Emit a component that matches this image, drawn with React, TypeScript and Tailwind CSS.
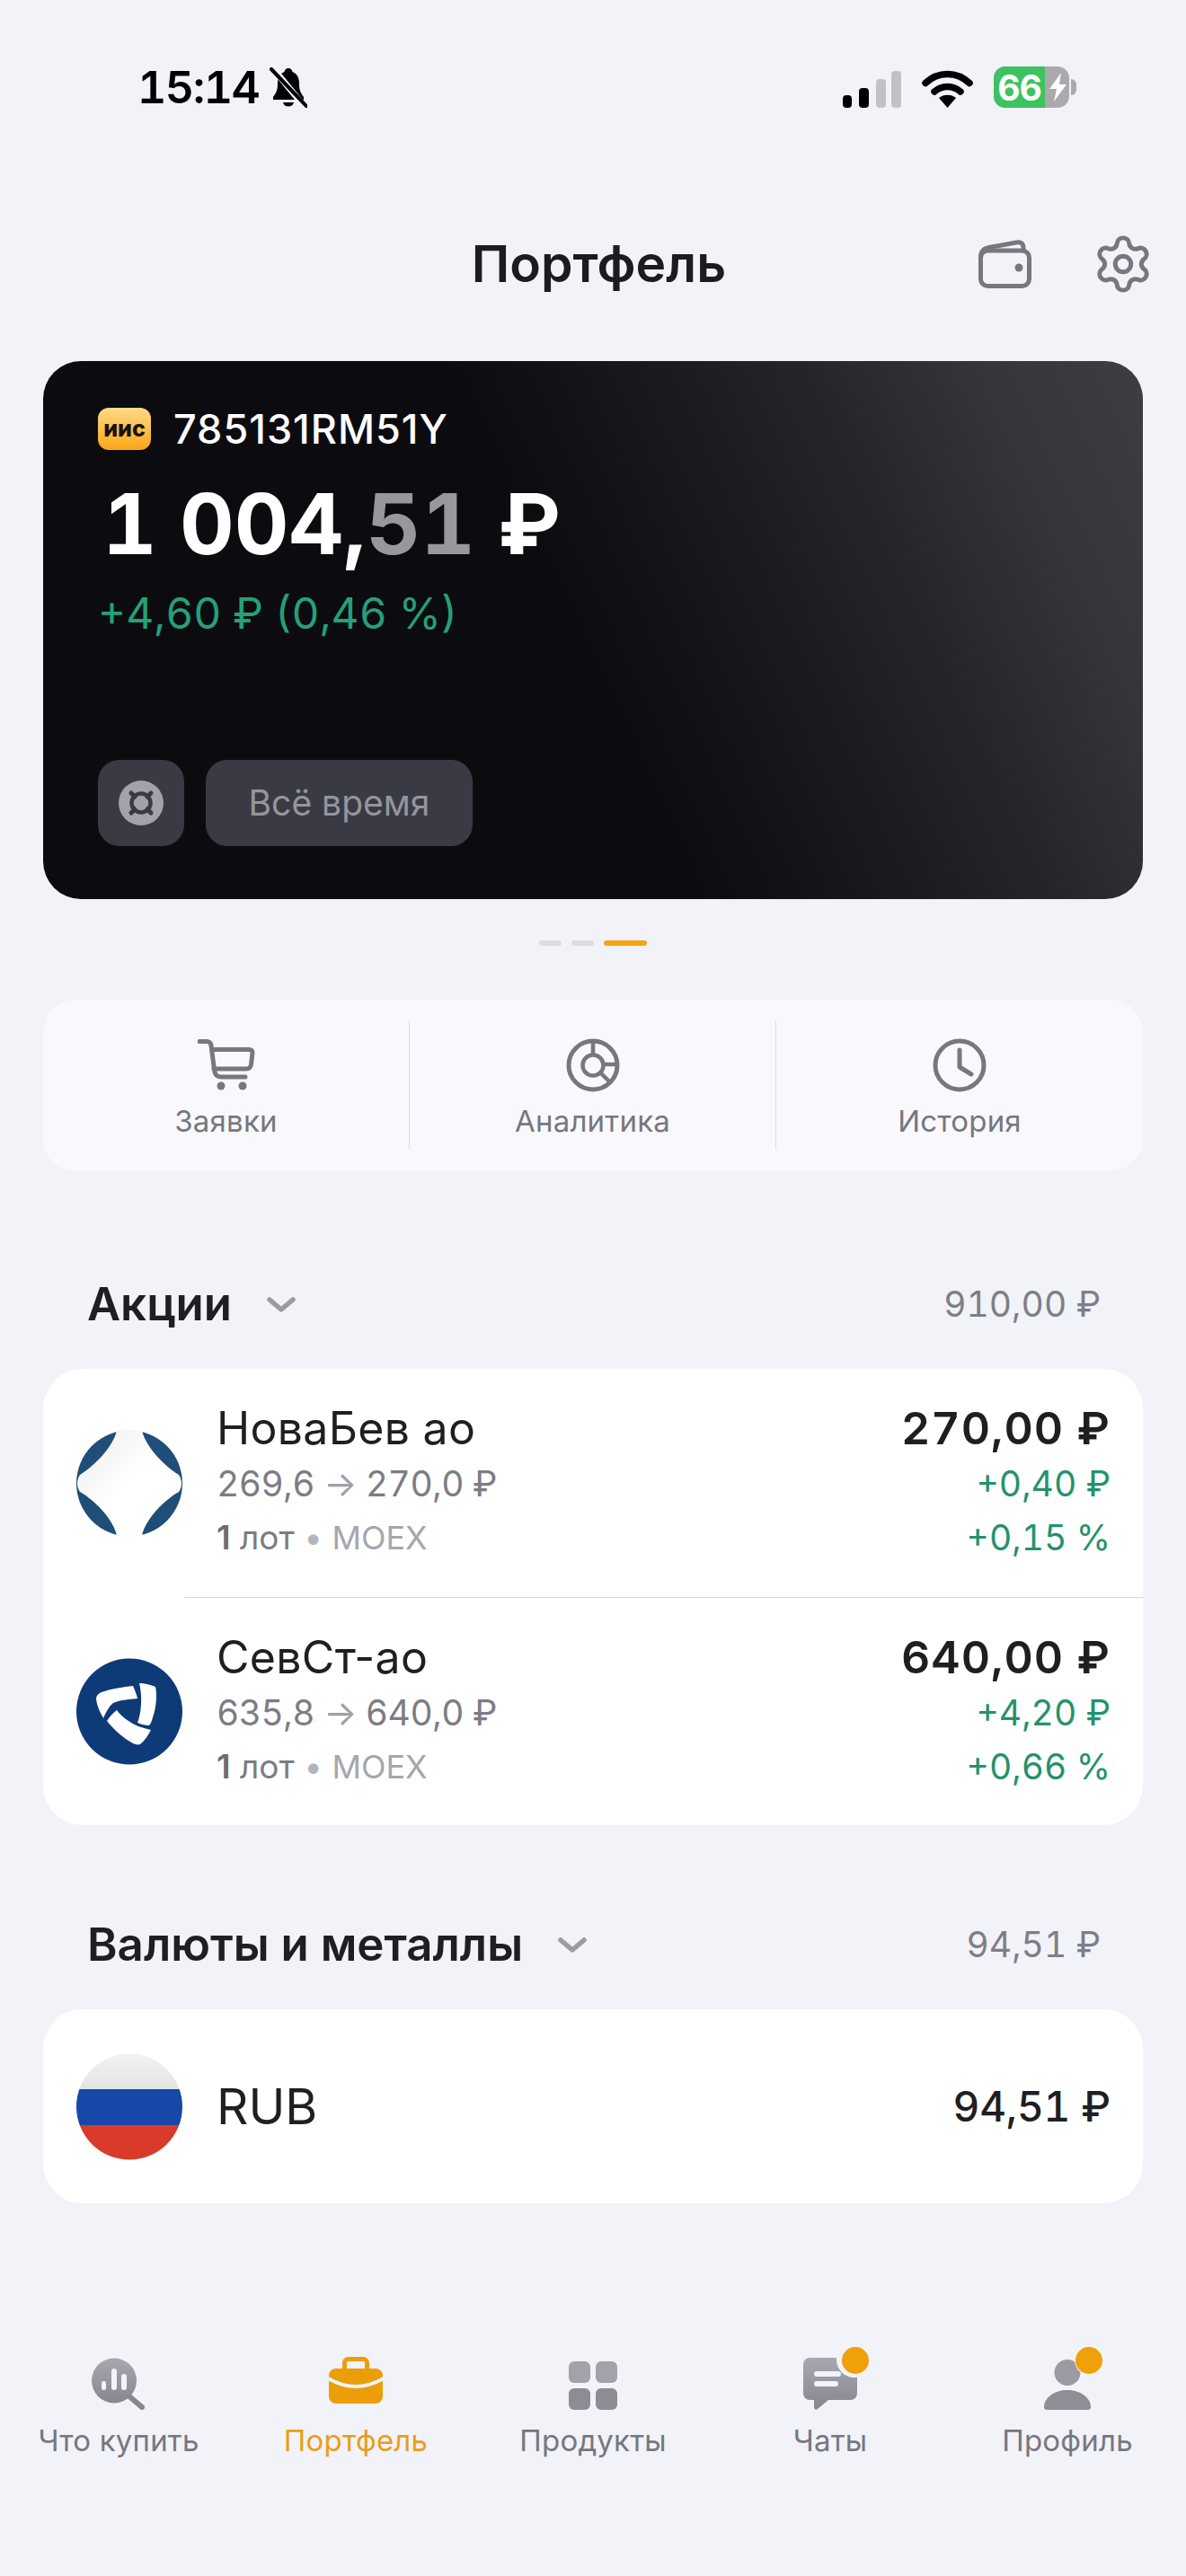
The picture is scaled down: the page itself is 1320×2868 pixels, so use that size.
import { Settings } from 'lucide-react'

const GRAY = '#77777f'

function SignalIcon() {
  return (
    <svg width="65" height="41" viewBox="0 0 65 41">
      <rect x="0" y="27" width="10" height="14" rx="4" fill="#000" />
      <rect x="18" y="19" width="11" height="22" rx="4" fill="#000" />
      <rect x="37" y="9" width="11" height="32" rx="4" fill="#c2c2c6" />
      <rect x="54" y="0" width="11" height="41" rx="4" fill="#c2c2c6" />
    </svg>
  )
}

function WifiIcon() {
  return (
    <svg width="57" height="42" viewBox="0 0 57 42" fill="none">
      <path d="M4 14.5 C18 1 39 1 53 14.5" stroke="#000" strokeWidth="7.5" strokeLinecap="round" />
      <path d="M14 24 C22 16.5 35 16.5 43 24" stroke="#000" strokeWidth="7.5" strokeLinecap="round" />
      <path d="M28.5 42 L19 31 C24 26.5 33 26.5 38 31 Z" fill="#000" />
    </svg>
  )
}

function BellOffIcon() {
  return (
    <svg width="42" height="45" viewBox="0 0 42 45" fill="none">
      <path d="M21 1 C24 1 25 3 25.5 5 C31 7 33 12 33 18 C33 26 35 29 38 33 L38 36 L4 36 L4 33 C7 29 9 26 9 18 C9 12 11 7 16.5 5 C17 3 18 1 21 1 Z" fill="#000" />
      <path d="M15 39 C16 45 26 45 27 39 Z" fill="#000" />
      <path d="M3 0 L39 44" stroke="#f2f2f9" strokeWidth="7" />
      <path d="M2 2 L41 43" stroke="#000" strokeWidth="4" strokeLinecap="round" />
    </svg>
  )
}

function BatteryIcon() {
  return (
    <div className="flex items-center">
      <div className="relative flex h-[46px] w-[84px] overflow-hidden rounded-[13px] bg-[#a9a9ae]">
        <div className="flex h-full w-[57px] items-center justify-center bg-[#3cc35f] text-[39px] font-bold leading-none tracking-[-1px] text-white">
          66
        </div>
        <svg className="absolute left-[60px] top-[7px]" width="23" height="32" viewBox="0 0 23 32">
          <path d="M15 0 L2 18 L10 18 L7 32 L21 13 L13 13 Z" fill="#fff" />
        </svg>
      </div>
      <div className="ml-[2px] h-[18px] w-[6px] rounded-r-full bg-[#a9a9ae]" />
    </div>
  )
}

function WalletIcon() {
  return (
    <svg width="59" height="54" viewBox="0 0 59 54" fill="none" stroke={GRAY} strokeWidth="5">
      <rect x="2.5" y="12" width="54" height="39.5" rx="8" />
      <path d="M2.5 20 C2.5 12 6 9.5 12 8.5 L42 3 C47 2 50 4 50 9 L50 12" />
      <circle cx="45" cy="31" r="4.5" fill={GRAY} stroke="none" />
    </svg>
  )
}

function CartIcon() {
  return (
    <svg width="64" height="58" viewBox="0 0 64 58" fill="none" stroke={GRAY} strokeWidth="5" strokeLinecap="round" strokeLinejoin="round">
      <path d="M2 2.5 H10 C13 2.5 14.5 4 15 7 L18.5 34 C19 39 21 42 26 42 H53" />
      <path d="M15.5 11.5 H57 C60 11.5 61 13 61 15 L59.5 28 C59 31.5 57 33 54 33 H18" />
      <circle cx="26" cy="52" r="4.5" fill={GRAY} stroke="none" />
      <circle cx="50" cy="52" r="4.5" fill={GRAY} stroke="none" />
    </svg>
  )
}

function DonutIcon() {
  return (
    <svg width="60" height="60" viewBox="0 0 60 60" fill="none" stroke={GRAY} strokeWidth="4.5">
      <circle cx="30" cy="30" r="27" strokeWidth="5" />
      <circle cx="30" cy="30" r="11.5" />
      <path d="M30 3 V18 M42 29 H57 M38.5 38.5 L49 49" />
    </svg>
  )
}

function ClockIcon() {
  return (
    <svg width="60" height="60" viewBox="0 0 60 60" fill="none" stroke={GRAY} strokeWidth="5" strokeLinecap="round" strokeLinejoin="round">
      <circle cx="30" cy="30" r="27" />
      <path d="M30 13 V32 L43 40" />
    </svg>
  )
}

function Chevron() {
  return (
    <svg width="32" height="17" viewBox="0 0 32 17" fill="none" stroke="#9b9ba2" strokeWidth="5.5" strokeLinecap="round" strokeLinejoin="round">
      <path d="M3 3 L16 14 L29 3" />
    </svg>
  )
}

function NovaBevLogo() {
  return (
    <svg width="118" height="119" viewBox="0 0 118 119" className="shrink-0">
      <defs>
        <linearGradient id="nb" x1="0" y1="0" x2="1" y2="1">
          <stop offset="0" stopColor="#ececec" />
          <stop offset="0.5" stopColor="#ffffff" />
        </linearGradient>
      </defs>
      <circle cx="59" cy="59.5" r="59" fill="#1f4e78" />
      <path d="M45 1 C60 -1 60 -1 73 1 C78 20 98 40 114 50 C118 56 118 63 114 69 C98 78 78 98 73 117 C60 120 58 120 45 117 C40 98 20 78 4 69 C0 63 0 56 4 50 C20 40 40 20 45 1 Z" fill="url(#nb)" />
    </svg>
  )
}

function SeverstalLogo() {
  return (
    <svg width="118" height="119" viewBox="0 0 118 119" className="shrink-0">
      <circle cx="59" cy="59.5" r="59" fill="#0f3a78" />
      <path d="M22 46 C22 42 24 40 28 38 C40 34 52 32 63 31 C65 36 67 40 68 45 C58 46 48 47 41 50 C36 54 33 60 30 67 C26 60 23 53 22 46 Z" fill="#fff" />
      <path d="M70 28 C76 28 83 30 88 32 C90 40 89 55 85 66 C84 70 83 73 81 75 C77 75 72 74 68 72 C72 62 74 44 70 28 Z" fill="#fff" />
      <path d="M34 70 C37 65 41 61 45 58 C48 62 53 67 58 70 C65 75 74 78 83 80 C80 86 76 92 71 96 C68 97 66 96 63 95 C52 89 42 80 34 70 Z" fill="#fff" />
    </svg>
  )
}

function RuFlag() {
  return (
    <svg width="118" height="119" viewBox="0 0 118 119" className="shrink-0">
      <defs>
        <clipPath id="ru">
          <circle cx="59" cy="59.5" r="59" />
        </clipPath>
        <linearGradient id="ruw" x1="0" y1="0" x2="0" y2="1">
          <stop offset="0" stopColor="#f2f2f2" />
          <stop offset="1" stopColor="#e4e4e4" />
        </linearGradient>
      </defs>
      <g clipPath="url(#ru)">
        <rect x="0" y="0" width="118" height="40" fill="url(#ruw)" />
        <rect x="0" y="40" width="118" height="40" fill="#1747a8" />
        <rect x="0" y="80" width="118" height="39" fill="#d93a2a" />
      </g>
    </svg>
  )
}

function IconGradient({ id }: { id: string }) {
  return (
    <defs>
      <linearGradient id={id} x1="0" y1="0" x2="0" y2="1">
        <stop offset="0" stopColor="#a8a8b0" />
        <stop offset="1" stopColor="#86868e" />
      </linearGradient>
    </defs>
  )
}

function SearchTabIcon() {
  return (
    <svg width="60" height="58" viewBox="0 0 60 58">
      <IconGradient id="t1" />
      <path d="M42 43 L56 55" stroke="#86868e" strokeWidth="6" strokeLinecap="round" />
      <circle cx="25" cy="25.5" r="25" fill="url(#t1)" />
      <rect x="11" y="26" width="5" height="10" rx="2.5" fill="#f2f2f9" />
      <rect x="22" y="12" width="6" height="24" rx="3" fill="#f2f2f9" />
      <rect x="33" y="18" width="6" height="18" rx="3" fill="#f2f2f9" />
    </svg>
  )
}

function CaseTabIcon() {
  return (
    <svg width="60" height="52" viewBox="0 0 60 52" fill="none" className="mb-[7px]">
      <rect x="17.5" y="2.5" width="25" height="16" rx="4" stroke="#ec9e08" strokeWidth="5" />
      <rect x="0" y="13" width="60" height="39" rx="8" fill="#ec9e08" />
      <path d="M-1 24 Q30 42 61 24" stroke="#f2f2f9" strokeWidth="4" />
    </svg>
  )
}

function GridTabIcon() {
  return (
    <svg width="54" height="54" viewBox="0 0 54 54">
      <rect x="0" y="0" width="24" height="24" rx="6" fill="#a2a2aa" />
      <rect x="30" y="0" width="24" height="24" rx="6" fill="#a2a2aa" />
      <rect x="0" y="30" width="24" height="24" rx="6" fill="#8c8c94" />
      <rect x="30" y="30" width="24" height="24" rx="6" fill="#8c8c94" />
    </svg>
  )
}

function ChatTabIcon() {
  return (
    <svg width="60" height="58" viewBox="0 0 60 58">
      <IconGradient id="t4" />
      <path d="M8 0 H52 C57 0 60 3 60 8 V39 C60 44 57 47 52 47 H28 L16 57 C14 58.5 12 57.5 12 55 V47 H8 C3 47 0 44 0 39 V8 C0 3 3 0 8 0 Z" fill="url(#t4)" />
      <rect x="12" y="15" width="30" height="6" rx="3" fill="#f2f2f9" />
      <rect x="12" y="26" width="27" height="6" rx="3" fill="#f2f2f9" />
      <circle cx="57" cy="2" r="20" fill="#f2f2f9" />
    </svg>
  )
}

function ProfileTabIcon() {
  return (
    <svg width="52" height="56" viewBox="0 0 52 56">
      <circle cx="26" cy="14.5" r="14.5" fill="#9a9aa2" />
      <path d="M3 56 C1 56 0 55 0 53 C0 42 12 34 26 34 C40 34 52 42 52 53 C52 55 51 56 49 56 Z" fill="#8e8e96" />
      <circle cx="53" cy="0" r="19" fill="#f2f2f9" />
    </svg>
  )
}

function Action({ icon, label, divided }: { icon: React.ReactNode; label: string; divided?: boolean }) {
  return (
    <div className={`flex h-[143px] flex-col items-center justify-start pt-[19px] ${divided ? 'border-r border-[#dddde2]' : ''}`}>
      <div className="flex h-[60px] items-center">{icon}</div>
      <div className="mt-[10px] text-[33px] leading-[44px] tracking-[0.2px] text-[#77777f]">{label}</div>
    </div>
  )
}

function SectionHead({ title, total }: { title: string; total: string }) {
  return (
    <div className="flex h-[60px] items-center pl-[97px] pr-[95px]">
      <span className="text-[51px] font-semibold leading-[60px] text-[#1f1f23]">{title}</span>
      <span className="ml-[39px]">
        <Chevron />
      </span>
      <span className="ml-auto text-[39px] tabular-nums text-[#7e7e86]">{total}</span>
    </div>
  )
}

function StockRow({ logo, name, from, to, price, delta, percent, height }: {
  logo: React.ReactNode
  name: string
  from: string
  to: string
  price: string
  delta: string
  percent: string
  height: string
}) {
  return (
    <div className={`flex items-center pl-[37px] pr-[36px] ${height}`}>
      {logo}
      <div className="ml-[38px]">
        <div className="text-[50px] leading-[61px] tracking-[0.3px] text-[#1f1f23]">{name}</div>
        <div className="text-[39px] leading-[61px] tracking-[-0.5px] tabular-nums text-[#7c7c84]">
          {from} <span className="text-[#a0a0a8]">→</span> {to}
        </div>
        <div className="text-[37px] leading-[60px] text-[#7c7c84]">
          <span className="font-semibold text-[#6c6c74]">1</span> лот <span className="text-[#b4b4bc]">•</span>{' '}
          <span className="text-[36px] text-[#a6a6ae]">MOEX</span>
        </div>
      </div>
      <div className="ml-auto text-right tabular-nums">
        <div className="text-[50px] font-semibold leading-[61px] tracking-[1px] text-[#1f1f23]">{price}</div>
        <div className="text-[39px] leading-[61px] text-[#24926c]">{delta}</div>
        <div className="text-[39px] leading-[60px] text-[#24926c]">{percent}</div>
      </div>
    </div>
  )
}

function Tab({ icon, label, active, badge }: { icon: React.ReactNode; label: string; active?: boolean; badge?: boolean }) {
  return (
    <div className="flex flex-col items-center">
      <div className="relative flex h-[72px] items-end pb-[2px]">
        {icon}
        {badge && <span className="absolute -right-[13px] top-0 h-[30px] w-[30px] rounded-full bg-[#f0a008]" />}
      </div>
      <div className={`mt-[11px] text-[33px] leading-[42px] tracking-[0.2px] ${active ? 'text-[#e89f17]' : 'text-[#77777f]'}`}>{label}</div>
    </div>
  )
}

export default function App() {
  return (
    <div className="flex h-[2868px] w-[1320px] flex-col overflow-hidden bg-[#f2f2f9] font-['Inter',sans-serif]">
      {/* status bar */}
      <div className="mt-[74px] flex h-[46px] items-center pl-[153px] pr-[122px]">
        <span className="text-[50px] font-semibold leading-none tracking-[-1.5px] tabular-nums text-black">15:14</span>
        <span className="ml-[12px]">
          <BellOffIcon />
        </span>
        <div className="ml-auto flex items-end gap-[23px]">
          <SignalIcon />
          <WifiIcon />
          <BatteryIcon />
        </div>
      </div>

      {/* header */}
      <div className="mt-[139px] grid h-[60px] grid-cols-[1fr_auto_1fr] items-center">
        <div />
        <h1 className="pl-[13px] text-[57px] font-semibold leading-[60px] text-[#1c1c20]">Портфель</h1>
        <div className="flex items-center justify-end gap-[72px] pr-[40px]">
          <WalletIcon />
          <Settings size={70} color={GRAY} strokeWidth={1.7} className="-mx-[5px]" />
        </div>
      </div>

      {/* account card */}
      <div className="mx-[48px] mt-[83px] flex h-[599px] flex-col rounded-[42px] bg-[linear-gradient(65deg,#0c0c10_0%,#0c0c10_48%,#16161b_60%,#25252a_75%,#34343a_87%,#3e3e42_100%)] pb-[59px] pl-[61px] pt-[52px]">
        <div className="flex items-center">
          <span className="flex h-[47px] w-[59px] items-center justify-center rounded-[12px] bg-[linear-gradient(180deg,#ffd98a_0%,#f9a714_100%)] text-[25px] font-extrabold leading-none text-[#1a1208]">
            иис
          </span>
          <span className="ml-[25px] text-[45px] font-medium leading-[47px] tracking-[1px] text-white">785131RM51Y</span>
        </div>
        <div className="ml-[5px] mt-[27px] text-[94px] font-bold leading-[110px] tabular-nums text-white">
          1 004,<span className="text-[#98989c]">51</span> ₽
        </div>
        <div className="mt-[16px] text-[48px] leading-[58px] tabular-nums text-[#25a078]">+4,60 ₽ (0,46 %)</div>
        <div className="mt-auto flex gap-[24px]">
          <div className="flex h-[96px] w-[96px] items-center justify-center rounded-[24px] bg-[#3a3a44]">
            <svg width="50" height="50" viewBox="0 0 50 50" fill="none">
              <circle cx="25" cy="25" r="25" fill="#a2a2aa" />
              <circle cx="25" cy="25" r="10.5" stroke="#3a3a44" strokeWidth="4.5" />
              <path d="M14 14 L18 18 M36 14 L32 18 M14 36 L18 32 M36 36 L32 32" stroke="#3a3a44" strokeWidth="5" strokeLinecap="round" />
            </svg>
          </div>
          <div className="flex h-[96px] w-[297px] items-center justify-center rounded-[24px] bg-[#3a3a44] text-[39px] text-[#95959d]">
            Всё время
          </div>
        </div>
      </div>

      {/* pager */}
      <div className="mt-[46px] flex h-[6px] gap-[11px] pl-[600px]">
        <span className="w-[25px] rounded-full bg-[#dcdce2]" />
        <span className="w-[25px] rounded-full bg-[#dcdce2]" />
        <span className="w-[48px] rounded-full bg-[#f4a414]" />
      </div>

      {/* actions */}
      <div className="mx-[48px] mt-[60px] grid h-[191px] grid-cols-3 items-center rounded-[36px] bg-[#f9f9fd]">
        <Action icon={<CartIcon />} label="Заявки" divided />
        <Action icon={<DonutIcon />} label="Аналитика" divided />
        <Action icon={<ClockIcon />} label="История" />
      </div>

      <div className="mt-[118px]">
        <SectionHead title="Акции" total="910,00 ₽" />
      </div>
      <div className="mx-[48px] mt-[42px] rounded-[44px] bg-white">
        <StockRow height="h-[254px]" logo={<NovaBevLogo />} name="НоваБев ао" from="269,6" to="270,0 ₽" price="270,00 ₽" delta="+0,40 ₽" percent="+0,15 %" />
        <div className="ml-[157px] h-px bg-[#d8d8dc]" />
        <StockRow height="h-[253px]" logo={<SeverstalLogo />} name="СевСт-ао" from="635,8" to="640,0 ₽" price="640,00 ₽" delta="+4,20 ₽" percent="+0,66 %" />
      </div>

      <div className="mt-[103px]">
        <SectionHead title="Валюты и металлы" total="94,51 ₽" />
      </div>
      <div className="mx-[48px] mt-[42px] flex h-[216px] items-center rounded-[44px] bg-white pl-[37px] pr-[36px]">
        <RuFlag />
        <span className="ml-[38px] text-[55px] leading-none text-[#1f1f23]">RUB</span>
        <span className="ml-auto text-[46px] font-medium leading-none tracking-[-0.2px] tabular-nums text-[#1f1f23]">94,51 ₽</span>
      </div>

      {/* tab bar */}
      <div className="mt-[160px] grid grid-cols-5">
        <Tab icon={<SearchTabIcon />} label="Что купить" />
        <Tab icon={<CaseTabIcon />} label="Портфель" active />
        <Tab icon={<GridTabIcon />} label="Продукты" />
        <Tab icon={<ChatTabIcon />} label="Чаты" badge />
        <Tab icon={<ProfileTabIcon />} label="Профиль" badge />
      </div>
    </div>
  )
}
